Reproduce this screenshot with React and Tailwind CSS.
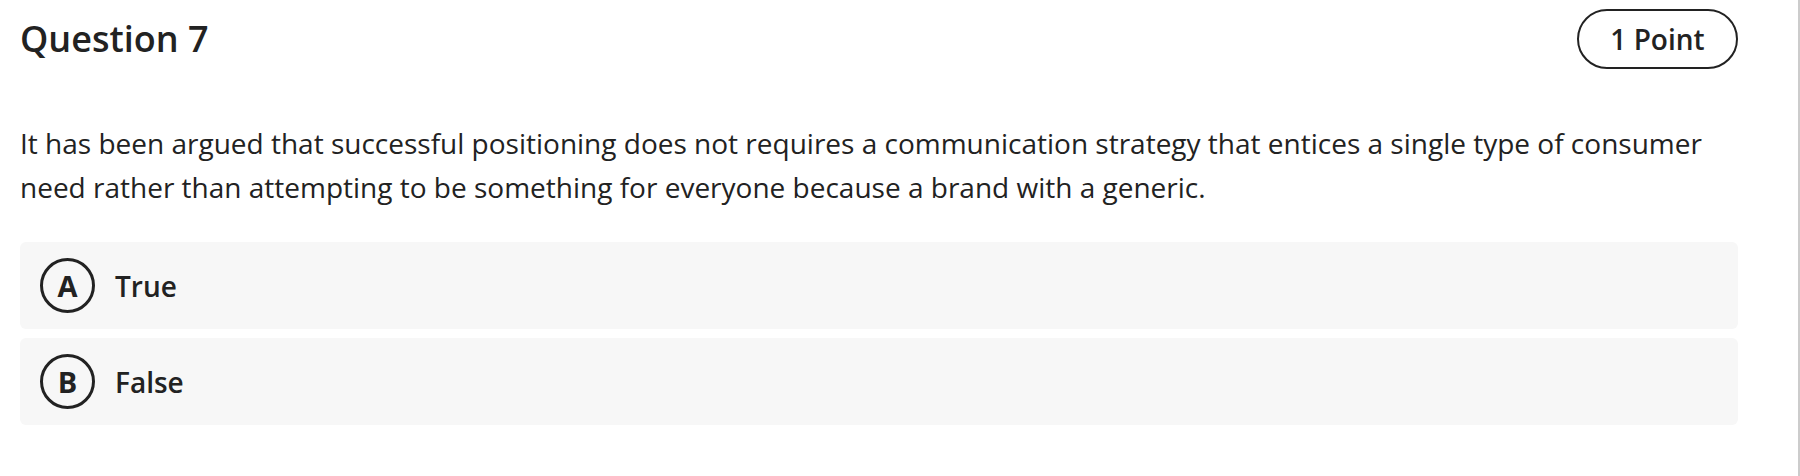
import React from "react";

const options = [
	{ key: "A", label: "True" },
	{ key: "B", label: "False" },
];

const App = () => {
	return (
		<div className="flex w-[1800px] h-[476px] bg-white text-[#222] font-['Open_Sans',sans-serif]">
			<div className="flex-1 pl-5 pr-[60px] pt-[9px]">
				{/* Header */}
				<div className="flex items-center justify-between h-[60px]">
					<h2 className="text-[36px] font-semibold leading-none">Question 7</h2>
					<div className="flex items-center justify-center w-[161px] h-[60px] rounded-full border-2 border-[#222] text-[28px] font-semibold">
						1 Point
					</div>
				</div>

				{/* Question */}
				<p className="mt-[52px] text-[28px] leading-[44px]">
					It has been argued that successful positioning does not requires a
					communication strategy that entices a single type of consumer need
					rather than attempting to be something for everyone because a brand
					with a generic.
				</p>

				{/* Options */}
				<div className="mt-[33px] flex flex-col gap-[9px]">
					{options.map((opt) => (
						<div
							key={opt.key}
							className="flex items-center gap-5 h-[87px] px-5 rounded-md bg-[#f7f7f7]"
						>
							<div className="flex items-center justify-center w-[55px] h-[55px] rounded-full border-[3px] border-[#222] text-[29px] font-bold">
								{opt.key}
							</div>
							<span className="text-[28px] font-semibold">{opt.label}</span>
						</div>
					))}
				</div>
			</div>
			<div className="w-[2px] h-full bg-[#cccccc]"></div>
		</div>
	);
};

export default App;
